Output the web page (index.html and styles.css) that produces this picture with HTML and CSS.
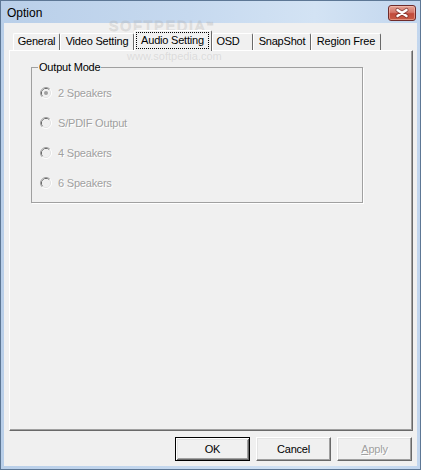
FILE: index.html
```html
<!DOCTYPE html>
<html>
<head>
<meta charset="utf-8">
<title>Option</title>
<link rel="stylesheet" href="styles.css">
</head>
<body>
<div class="window">
  <div class="titlebar">
    <span class="title">Option</span>
    <div class="close">
      <svg width="28" height="16" viewBox="0 0 28 16">
        <path d="M9.5 5 L18.5 11 M18.5 5 L9.5 11" stroke="#5b1c1c" stroke-width="4.2" stroke-linecap="round" opacity="0.55"/>
        <path d="M9.5 5 L18.5 11 M18.5 5 L9.5 11" stroke="#ffffff" stroke-width="2.4" stroke-linecap="round"/>
      </svg>
    </div>
  </div>
  <div class="client">
    <div class="tabs">
      <div class="tab tab-general">General</div>
      <div class="tab tab-video">Video Setting</div>
      <div class="tab tab-audio selected"><span class="focus">Audio Setting</span></div>
      <div class="tab tab-osd">OSD</div>
      <div class="tab tab-snap">SnapShot</div>
      <div class="tab tab-region">Region Free</div>
    </div>
    <div class="panel">
      <fieldset class="group">
        <legend>Output Mode</legend>
        <div class="radio">
          <svg width="12" height="12" viewBox="0 0 12 12">
            <path d="M2.11 9.89 A5.5 5.5 0 0 1 9.89 2.11" fill="none" stroke="#a0a0a0"/>
            <path d="M9.89 2.11 A5.5 5.5 0 0 1 2.11 9.89" fill="none" stroke="#ffffff"/>
            <path d="M2.82 9.18 A4.5 4.5 0 0 1 9.18 2.82" fill="none" stroke="#696969"/>
            <path d="M9.18 2.82 A4.5 4.5 0 0 1 2.82 9.18" fill="none" stroke="#e3e3e3"/>
            <circle cx="6" cy="6" r="4" fill="#f0f0f0"/>
            <circle cx="6" cy="6" r="2" fill="#a0a0a0"/>
          </svg>
          <span>2 Speakers</span>
        </div>
        <div class="radio">
          <svg width="12" height="12" viewBox="0 0 12 12">
            <path d="M2.11 9.89 A5.5 5.5 0 0 1 9.89 2.11" fill="none" stroke="#a0a0a0"/>
            <path d="M9.89 2.11 A5.5 5.5 0 0 1 2.11 9.89" fill="none" stroke="#ffffff"/>
            <path d="M2.82 9.18 A4.5 4.5 0 0 1 9.18 2.82" fill="none" stroke="#696969"/>
            <path d="M9.18 2.82 A4.5 4.5 0 0 1 2.82 9.18" fill="none" stroke="#e3e3e3"/>
            <circle cx="6" cy="6" r="4" fill="#f0f0f0"/>
          </svg>
          <span>S/PDIF Output</span>
        </div>
        <div class="radio">
          <svg width="12" height="12" viewBox="0 0 12 12">
            <path d="M2.11 9.89 A5.5 5.5 0 0 1 9.89 2.11" fill="none" stroke="#a0a0a0"/>
            <path d="M9.89 2.11 A5.5 5.5 0 0 1 2.11 9.89" fill="none" stroke="#ffffff"/>
            <path d="M2.82 9.18 A4.5 4.5 0 0 1 9.18 2.82" fill="none" stroke="#696969"/>
            <path d="M9.18 2.82 A4.5 4.5 0 0 1 2.82 9.18" fill="none" stroke="#e3e3e3"/>
            <circle cx="6" cy="6" r="4" fill="#f0f0f0"/>
          </svg>
          <span>4 Speakers</span>
        </div>
        <div class="radio">
          <svg width="12" height="12" viewBox="0 0 12 12">
            <path d="M2.11 9.89 A5.5 5.5 0 0 1 9.89 2.11" fill="none" stroke="#a0a0a0"/>
            <path d="M9.89 2.11 A5.5 5.5 0 0 1 2.11 9.89" fill="none" stroke="#ffffff"/>
            <path d="M2.82 9.18 A4.5 4.5 0 0 1 9.18 2.82" fill="none" stroke="#696969"/>
            <path d="M9.18 2.82 A4.5 4.5 0 0 1 2.82 9.18" fill="none" stroke="#e3e3e3"/>
            <circle cx="6" cy="6" r="4" fill="#f0f0f0"/>
          </svg>
          <span>6 Speakers</span>
        </div>
      </fieldset>
    </div>
    <div class="buttons">
      <div class="btn default">OK</div>
      <div class="btn">Cancel</div>
      <div class="btn disabled"><u>A</u>pply</div>
    </div>
  </div>
  <div class="watermark">
    <span class="wm-big">SOFTPEDIA<sup>™</sup></span>
    <span class="wm-small">www.softpedia.com</span>
  </div>
</div>
</body>
</html>
```

FILE: styles.css
```css
html, body {
  margin: 0;
  padding: 0;
  background: #ffffff;
  overflow: hidden;
}

.window {
  position: relative;
  width: 421px;
  height: 470px;
  box-sizing: border-box;
  border: 1px solid #5d7795;
  padding: 0 3px 3px 3px;
  background: linear-gradient(to right, #b9cfe9 0%, #c6d9ef 45%, #d3e3f4 75%, #c2d6ee 100%);
  display: flex;
  flex-direction: column;
  font-family: "Liberation Sans", Arial, sans-serif;
  font-size: 11px;
  letter-spacing: -0.2px;
  color: #000;
}

.titlebar {
  height: 22px;
  display: flex;
  align-items: flex-start;
  justify-content: space-between;
}

.title {
  font-size: 12px;
  letter-spacing: 0;
  line-height: 22px;
  padding-left: 3px;
  margin-top: 1px;
  color: #000;
}

.close {
  width: 28px;
  height: 16px;
  margin-top: 4px;
  margin-right: 1px;
  box-sizing: border-box;
  border: 1px solid #6e2b2b;
  border-radius: 3px;
  background: linear-gradient(#e4a496 0%, #d5776a 45%, #c14a3b 55%, #c85a44 100%);
  box-shadow: inset 0 0 0 1px rgba(255, 210, 200, 0.45);
  display: flex;
  align-items: center;
  justify-content: center;
}

.close svg {
  display: block;
  margin: -1px;
}

.client {
  flex: 1;
  background: #f0f0f0;
  display: flex;
  flex-direction: column;
  padding: 7px 4px 5px 5px;
}

.tabs {
  height: 20px;
  display: flex;
  align-items: flex-end;
  padding-left: 4px;
}

.tab {
  height: 17px;
  box-sizing: border-box;
  border-top: 1px solid #ffffff;
  border-left: 1px solid #ffffff;
  border-right: 1px solid #696969;
  border-radius: 2px 2px 0 0;
  padding-top: 1px;
  line-height: 13px;
  text-align: center;
  white-space: nowrap;
  background: #f0f0f0;
}

.tab-general { width: 47px; }
.tab-video { width: 74px; }
.tab-audio { width: 78px; }
.tab-osd { width: 41px; padding-right: 9px; }
.tab-snap { width: 58px; }
.tab-region { width: 70px; }

.tab.selected {
  height: 21px;
  margin-bottom: -1px;
  position: relative;
  z-index: 1;
  padding-top: 1px;
  text-align: left;
}

.focus {
  display: inline-block;
  width: 73px;
  height: 17px;
  box-sizing: border-box;
  margin-left: 1px;
  border: 1px dotted #000;
  line-height: 15px;
  text-align: center;
}

.panel {
  flex: 1;
  border-top: 1px solid #ffffff;
  border-left: 1px solid #ffffff;
  border-right: 1px solid #696969;
  border-bottom: 1px solid #696969;
  box-shadow: inset -1px -1px 0 #a0a0a0;
  padding: 10px 0 0 21px;
}

.group {
  width: 332px;
  box-sizing: border-box;
  margin: 0;
  border: 1px solid #a0a0a0;
  box-shadow: 1px 1px 0 #ffffff;
  padding: 5px 0 4px 8px;
}

.group legend {
  margin-left: -2px;
  padding: 0 1px;
  line-height: 12px;
  color: #000;
}

.radio {
  height: 30px;
  display: flex;
  align-items: center;
  gap: 6px;
  color: #a0a0a0;
}

.radio svg {
  display: block;
  flex: none;
}

.radio span {
  text-shadow: 1px 1px 0 #ffffff;
}

.buttons {
  margin-top: 6px;
  height: 24px;
  display: flex;
  justify-content: flex-end;
  gap: 6px;
  padding-right: 1px;
}

.btn {
  width: 75px;
  height: 24px;
  box-sizing: border-box;
  border: 1px solid;
  border-color: #ffffff #696969 #696969 #ffffff;
  box-shadow: inset -1px -1px 0 #a0a0a0, inset 1px 1px 0 #e3e3e3;
  background: #f0f0f0;
  display: flex;
  align-items: center;
  justify-content: center;
  line-height: 13px;
}

.btn.default {
  border-color: #000000;
  box-shadow: inset 1px 1px 0 #ffffff, inset -1px -1px 0 #696969, inset 2px 2px 0 #e3e3e3, inset -2px -2px 0 #a0a0a0;
}

.btn.disabled {
  color: #a0a0a0;
  text-shadow: 1px 1px 0 #ffffff;
}

.watermark {
  position: absolute;
  left: 0;
  top: 0;
  pointer-events: none;
}

.wm-big {
  position: absolute;
  left: 108px;
  top: 18px;
  font-size: 14px;
  line-height: 14px;
  letter-spacing: 2px;
  color: transparent;
  -webkit-text-stroke: 1px rgba(175, 175, 175, 0.35);
  white-space: nowrap;
}

.wm-big sup {
  font-size: 7px;
  line-height: 7px;
  vertical-align: 4px;
}

.wm-small {
  position: absolute;
  left: 126px;
  top: 50px;
  font-size: 11px;
  line-height: 11px;
  letter-spacing: 0;
  color: rgba(180, 180, 180, 0.35);
  white-space: nowrap;
}
```
